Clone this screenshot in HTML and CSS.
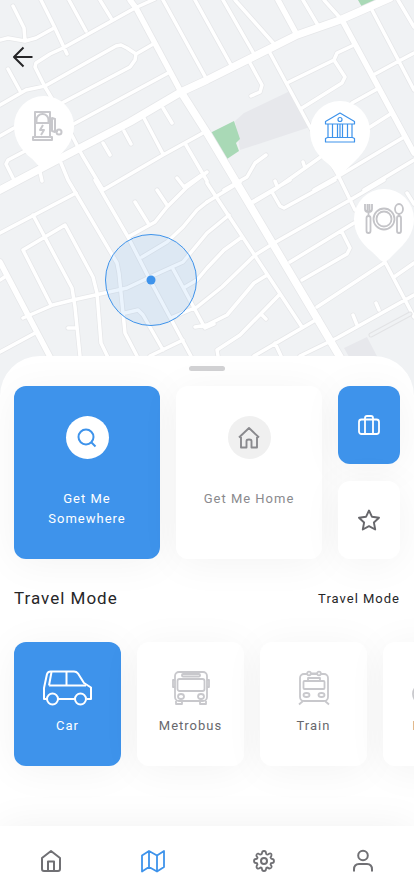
FILE: index.html
```html
<!DOCTYPE html>
<html lang="en">
<head>
  <meta charset="UTF-8">
  <meta name="viewport" content="width=device-width, initial-scale=1.0">
  <title>Travel Map</title>
  <link rel="stylesheet" href="styles.css">
</head>
<body>
  <main class="screen">
    <section class="map" aria-label="Map">
      <svg class="map-canvas" viewBox="0 0 414 396" preserveAspectRatio="xMidYMin slice" aria-hidden="true">
        <defs>
          <!-- thin streets -->
          <path id="streets" d="M0 40 8 38 25 41 36 38 54 28M41 0 54 26 67 54M13 6 24 28 25 40M69 0 86 31M100 0 111 18M155-1 135 8 63 48 50 54 36 63 35 67 45 87 60 112 82 155 103 190M0 105 26 90 45 86 116 46 121 45 127 48 136 54 135 60 130 67 60 104M136 54 155 43M0 136 14 128M70 126 170 72M27 150 8 160 6 164 15 182M61 163 68 180 117 263 119 273 123 313 125 333 137 356M103 143 110 155M124 131 131 144M163 108 172 123M144 118 163 154M103 190 163 155 203 133M186 145 207 181M177 178 184 187 203 174M40 172 42 181M8 69 20 91M163 0 207 80M195 0 231 65M223 0 254 54M235 0 275 45M303 0 319 27M324 0 342 20M372 10 414 90M398 0 414 27M375 74 399 61 414 53M270 53 310 127 337 173 355 210M289 82 334 60 337 53 354 45M334 60 345 77 342 83 302 108M250 63 262 85 260 92 251 96M352 103 379 88M370 127 392 113M254 202 274 190 322 156M303 162 305 168M275 181 277 186M207 202 240 182M224 190 247 177 255 163 266 155M272 192 280 206 284 208 335 180M314 190 337 177 404 137M252 202 290 180M364 190 414 160"/>
          <path id="streets-south" d="M0 233 76 193M135 202 148 223M157 190 167 205M128 237 155 222 167 207 187 187 207 172M142 257 167 242 183 227 197 210 207 202M23 318 53 305 73 300 127 288 150 277 183 262 207 233 229 215M172 267 205 328 214 324M185 287 197 280 207 268 224 250 242 237M173 317 197 307 222 287 255 255 274 243 350 200 384 180M33 215 72 288 75 307 82 376M51 305 23 250 65 225 93 277 97 293 101 343 115 372M125 313 138 310 143 315 163 350M150 356 183 340M0 352 37 332M68 328 75 328M0 280 6 276M195 327 207 325 227 315 254 283 267 275M207 183 302 327M218 356 217 350 240 335 279 295M262 315 266 319M254 356 319 318M275 343 281 356M300 356 337 338 414 295M317 307 384 263M290 262 354 223M342 232 350 248 347 254 302 280M384 260 414 317M394 277 414 263M376 303 379 310M353 315 357 325M407 193 414 204M95 180 128 237 150 280 193 360"/>
          <path id="roads" d="M130 0 136 8 181 92M278 0 297 35M342 20 414 153M0 262 58 372"/>
          <path id="avenues" d="M0 190 80 148 130 122 181 92 207 80 297 35 340 20 390-2M181 92 207 133 235 180 350 374"/>
        </defs>
        <rect width="414" height="396" fill="#f0f2f4"/>
        <path d="M244 113 290 91 310 127 240 150 235 121ZM344 348 367 337 380 362H352Z" fill="#e7e8ec"/>
        <path d="M210 133 234 121 240 139 236 143 239 151 227 159ZM358 0 362 7 378 0Z" fill="#a9d9b6"/>
        <g class="road-edge">
          <use href="#streets" stroke-width="5"/>
          <use href="#streets-south" stroke-width="5"/>
          <use href="#roads" stroke-width="7"/>
          <use href="#avenues" stroke-width="9"/>
        </g>
        <g class="road">
          <use href="#streets" stroke-width="3.500"/>
          <use href="#streets-south" stroke-width="3.500"/>
          <use href="#roads" stroke-width="5.500"/>
          <use href="#avenues" stroke-width="7.500"/>
        </g>
        <path d="M371 335 410 314" fill="none" stroke="#e2e3e5" stroke-width="5" stroke-linecap="round"/>
        <path d="M371 335 410 314" fill="none" stroke="#f0f2f4" stroke-width="3" stroke-linecap="round"/>
        <circle cx="151" cy="280" r="45.500" fill="#3e93eb" fill-opacity=".1" stroke="#3e93eb"/>
        <circle cx="151" cy="280" r="4.500" fill="#3e93eb"/>
      </svg>

      <button class="back-btn" aria-label="Back">
        <svg width="22" height="22" viewBox="0 0 22 22"><path d="M20.500 11H2M11.500 1.500 2 11l9.500 9.500" stroke="#262628" stroke-width="2"/></svg>
      </button>

      <button class="pin pin-charge" aria-label="Charging station">
        <svg width="60" height="74" viewBox="0 0 60 74">
          <path d="M29 73C26 73 22 66 17 62 8 55 0 44 0 30a30 30 0 0 1 60 0c0 14-8 24-18 33-5 5-10 10-13 10Z" fill="#fff"/>
          <g stroke="#c8c8cc" stroke-width="2">
            <path d="M21 40V16h15v24M19 41h19v3H19ZM22.500 27v-3a6 6 0 0 1 12 0v3ZM29 29l-3 5h4l-3 5"/>
            <path d="M38 22v13l3 1V23ZM41 35h3"/>
            <circle cx="45" cy="36" r="2.500"/>
          </g>
        </svg>
      </button>
      <button class="pin pin-bank" aria-label="Bank">
        <svg width="60" height="74" viewBox="0 0 60 74">
          <path d="M29 73C26 73 22 66 17 62 8 55 0 44 0 30a30 30 0 0 1 60 0c0 14-8 24-18 33-5 5-10 10-13 10Z" fill="#fff"/>
          <g stroke="#3e93eb" stroke-width="1.200">
            <path d="M15.500 20.500 30 12l14.500 8.500V23h-29ZM15.500 41v-3.500l2-1h25l2 1V41ZM18 23v13.500M22.500 23v13.500M27.500 23v13.500M32.500 23v13.500M37.500 23v13.500M42 23v13.500M30 23v13.500"/>
            <circle cx="30" cy="18.500" r="2"/>
          </g>
        </svg>
      </button>
      <button class="pin pin-food" aria-label="Restaurant">
        <svg width="60" height="74" viewBox="0 0 60 74">
          <path d="M30 73C27 73 22 66 17 62 8 55 0 44 0 30a30 30 0 0 1 60 0c0 14-8 24-18 33-5 5-9 10-12 10Z" fill="#fff"/>
          <g stroke="#c4c4c8" stroke-width="1.800">
            <circle cx="30" cy="30" r="10.500"/>
            <circle cx="30" cy="30" r="7.500"/>
            <path d="M11 15v5q0 3 3.500 3t3.500-3v-5M13.500 15v7M15.500 15v7M14.500 23v4"/>
            <rect x="12.500" y="27" width="4" height="17" rx="2"/>
            <ellipse cx="45" cy="20" rx="4" ry="5"/>
            <path d="M45 25v2"/>
            <rect x="43" y="27" width="4" height="17" rx="2"/>
          </g>
        </svg>
      </button>
    </section>

    <section class="sheet">
      <div class="handle"></div>

      <div class="shortcuts">
        <button class="card active">
          <span class="card-icon">
            <svg width="22" height="22" viewBox="0 0 22 22"><circle cx="10" cy="10" r="7.500" stroke-width="2"/><path d="m15.500 15.500 4 4" stroke-width="2"/></svg>
          </span>
          <span class="card-label">Get Me Somewhere</span>
        </button>
        <button class="card">
          <span class="card-icon">
            <svg width="22" height="22" viewBox="0 0 22 22"><path d="M1 10.500 11 1l10 9.500M3 10v10.500h5.500V14q0-1.500 2.500-1.500t2.500 1.500v6.500H19V10" stroke-width="1.900"/></svg>
          </span>
          <span class="card-label">Get Me Home</span>
        </button>
        <div class="small-cards">
          <button class="card small active" aria-label="Work">
            <svg width="22" height="20" viewBox="0 0 22 20"><rect x="1" y="4.500" width="20" height="14.500" rx="2.500" stroke-width="1.800"/><path d="M7 19V3q0-2 2-2h4q2 0 2 2v16" stroke-width="1.800"/></svg>
          </button>
          <button class="card small" aria-label="Favourites">
            <svg width="22" height="22" viewBox="0 0 22 22"><path d="m11 1.500 3 6.300 7 .9-5.100 4.800 1.300 7L11 17.200l-6.200 3.300 1.300-7L1 8.700l7-.9Z" stroke-width="1.900"/></svg>
          </button>
        </div>
      </div>

      <div class="section-head">
        <h2>Travel Mode</h2>
        <a href="#modes">Travel Mode</a>
      </div>

      <div class="modes" id="modes">
        <button class="mode active">
          <svg width="50" height="36" viewBox="0 0 50 36">
            <g stroke-width="2">
              <path d="M4 29H1V18L4 4q1-2.500 3.500-2.500H31q2.500 0 4 2L41 13l7 4.500V29h-4M15 29h17"/>
              <path d="M6 15.500 8.500 2M23.500 2v13.500M6 15.500H43"/>
              <circle cx="9.500" cy="29" r="5.500"/>
              <circle cx="37.500" cy="29" r="5.500"/>
            </g>
          </svg>
          <span>Car</span>
        </button>
        <button class="mode">
          <svg width="40" height="36" viewBox="0 0 40 36">
            <g stroke-width="1.800">
              <rect x="4" y="2" width="32" height="29" rx="4"/>
              <rect x="6.500" y="9" width="27" height="12" rx="2"/>
              <rect x="11" y="4" width="18" height="2.500" rx="1"/>
              <path d="M4 10H2v7h2M36 10h2v7h-2M5 31v3h6v-3M29 31v3h6v-3"/>
              <ellipse cx="10" cy="26.500" rx="3" ry="2.500"/>
              <ellipse cx="30" cy="26.500" rx="3" ry="2.500"/>
            </g>
          </svg>
          <span>Metrobus</span>
        </button>
        <button class="mode">
          <svg width="34" height="36" viewBox="0 0 34 36">
            <g stroke-width="1.800">
              <rect x="3" y="4" width="28" height="27" rx="4"/>
              <rect x="6.500" y="11" width="21" height="8" rx="1"/>
              <path d="M11 10V8h12v2M6 31l-4 3.500M28 31l4 3.500M13 3.500h8"/>
              <circle cx="12" cy="3.500" r="1.800" fill="#fff"/>
              <circle cx="22" cy="3.500" r="1.800" fill="#fff"/>
              <ellipse cx="9.500" cy="25" rx="3" ry="2"/>
              <ellipse cx="24.500" cy="25" rx="3" ry="2"/>
            </g>
          </svg>
          <span>Train</span>
        </button>
        <button class="mode">
          <svg width="50" height="36" viewBox="0 0 50 36">
            <g stroke-width="1.800">
              <circle cx="11" cy="24" r="10"/>
              <circle cx="39" cy="24" r="10"/>
              <path d="M11 24 18 9h14l7 15M18 9l7 15 7-15M11 24h14M15 5h6M30 4h5"/>
            </g>
          </svg>
          <span>Bicycle</span>
        </button>
      </div>
    </section>

    <nav class="tab-bar">
      <a href="#home" aria-label="Home">
        <svg width="22" height="24" viewBox="0 0 22 24"><path d="M2 9 11 2l9 7v11q0 2-2 2H4q-2 0-2-2ZM8 22v-9.500h6V22" stroke-width="2"/></svg>
      </a>
      <a href="#map" class="current" aria-label="Map">
        <svg width="26" height="24" viewBox="0 0 26 24"><path d="M2 6.500 9 2l8 4.500L24 2v16l-7 4.500L9 18l-7 4.500ZM9 2v16M17 6.500v16" stroke-width="1.800"/></svg>
      </a>
      <a href="#settings" aria-label="Settings">
        <svg width="24" height="24" viewBox="0 0 24 24"><circle cx="12" cy="12" r="3" stroke-width="2"/><path d="M10 4q0-2 2-2t2 2 2 1.500l1.500-1q2-.5 2 1.500 0 1.500-1 2.500.5 1.500 1.500 1.500 2 0 2 2t-2 2q-1.500 0-1.500 1.500l1 1.500q.5 2-1.500 2.500-1.500 0-2.500-1-1.500 0-1.500 1.500 0 2-2 2t-2-2q0-1.500-1.500-1.500l-1.500 1q-2 .5-2.500-1.500 0-1.500 1-2.500 0-1.500-1.500-1.500-2 0-2-2t2-2q1.500 0 1.500-1.500l-1-1.500Q4 5 6 4.500l2 1Q10 5.500 10 4Z" stroke-width="1.800"/></svg>
      </a>
      <a href="#profile" aria-label="Profile">
        <svg width="22" height="24" viewBox="0 0 22 24"><circle cx="11" cy="6.500" r="4.800" stroke-width="2"/><path d="M2 22.500v-2Q2 15 7 15h8q5 0 5 5.500v2" stroke-width="2"/></svg>
      </a>
    </nav>
  </main>
</body>
</html>
```

FILE: styles.css
```css
* { box-sizing: border-box; }
body {
  margin: 0;
  font-family: Roboto, sans-serif;
  letter-spacing: 1px;
  background-color: #f0f2f4;
  color: #262628;
}
button {
  border: none;
  padding: 0;
  background: none;
  font: inherit;
  letter-spacing: inherit;
  color: inherit;
  cursor: pointer;
}
svg {
  display: block;
  fill: none;
  stroke-linejoin: round;
}
.screen {
  min-height: 100vh;
  display: flex;
  flex-direction: column;
  overflow: hidden;
}

/* Map */
.map { position: relative; height: 396px; }
.map-canvas { width: 100%; height: 100%; }
.road-edge, .road { stroke-linecap: round; }
.road-edge { stroke: #e6e7e9; }
.road { stroke: #fff; }
.back-btn { position: absolute; left: 12px; top: 46px; }
.pin { position: absolute; }
.pin-charge { left: 14px; top: 96px; }
.pin-bank { left: 310px; top: 101px; }
.pin-food { left: 354px; top: 189px; }

/* Bottom sheet */
.sheet {
  position: relative;
  flex: 1;
  margin-top: -40px;
  padding: 10px 14px 60px;
  background-color: #fff;
  border-radius: 40px 40px 0 0;
  overflow: hidden;
}
.handle {
  width: 36px;
  height: 5px;
  margin: 0 auto 15px;
  border-radius: 3px;
  background-color: #d2d2d4;
}
.shortcuts {
  display: grid;
  grid-template-columns: 1fr 1fr 62px;
  gap: 16px;
}
.card, .mode {
  border-radius: 12px;
  background-color: #fff;
  box-shadow: 0 4px 40px rgba(0, 0, 0, 0.05);
  font-size: 13px;
  line-height: 20px;
}
.card {
  height: 173px;
  padding: 30px 24px 0;
  display: flex;
  flex-direction: column;
  align-items: center;
  gap: 30px;
  color: #8a8a8e;
  stroke: #8a8a8e;
}
.card-icon {
  width: 43px;
  height: 43px;
  display: flex;
  align-items: center;
  justify-content: center;
  border-radius: 50%;
  background-color: #f0f0f0;
}
.card-label { white-space: nowrap; }
.active {
  background-color: #3e93eb;
  color: #fff;
  stroke: #fff;
}
.active .card-icon { background-color: #fff; stroke: #3e93eb; }
.active .card-label { white-space: normal; }
.small-cards { display: grid; gap: 17px; }
.small {
  height: 78px;
  padding: 0;
  justify-content: center;
}
.small:not(.active) { stroke: #68686c; }

.section-head {
  display: flex;
  align-items: center;
  justify-content: space-between;
  margin: 27px 0 31px;
}
.section-head h2 {
  margin: 0;
  font-size: 17px;
  font-weight: 400;
  line-height: 25px;
}
.section-head a {
  font-size: 13px;
  line-height: 25px;
  color: inherit;
  text-decoration: none;
}

.modes { display: flex; gap: 16px; }
.mode {
  flex: 0 0 107px;
  height: 124px;
  padding-bottom: 2px;
  display: flex;
  flex-direction: column;
  align-items: center;
  justify-content: center;
  gap: 10px;
}
.mode:not(.active) { color: #68686c; stroke: #c8c8cc; }

/* Tab bar */
.tab-bar {
  position: relative;
  height: 70px;
  padding-right: 12px;
  display: grid;
  grid-template-columns: 102fr 102fr 120fr 78fr;
  place-items: center;
  background-color: #fff;
  box-shadow: 0 0 40px rgba(0, 0, 0, 0.06);
}
.tab-bar a { stroke: #707074; }
.tab-bar .current { stroke: #3e93eb; }
```
